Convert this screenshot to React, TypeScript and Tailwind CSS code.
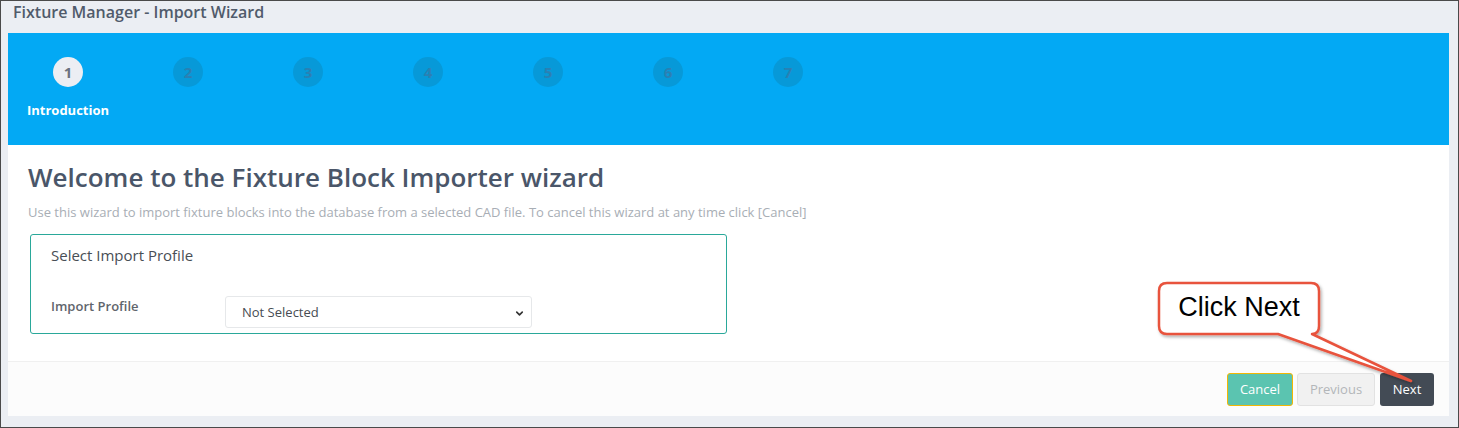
import React from 'react';
import { ChevronDown } from 'lucide-react';

const steps = [1, 2, 3, 4, 5, 6, 7];

export default function App() {
  return (
    <div
      className="relative w-[1459px] h-[428px] border border-[#4a4a4a] bg-[#ebeef3] overflow-hidden"
      style={{ fontFamily: '"Open Sans", "Noto Sans", sans-serif' }}
    >
      <div className="h-[32px] pl-[12px] flex items-start">
        <h1 className="text-[16px] leading-[22px] font-semibold text-[#505b6b]">Fixture Manager - Import Wizard</h1>
      </div>

      <div className="ml-[7px] w-[1441px] flex flex-col">
        {/* steps */}
        <div className="h-[112px] bg-[#03a9f4] flex">
          {steps.map((n) => (
            <div key={n} className="w-[120px] flex flex-col items-center pt-[24px]">
              <div
                className={
                  n === 1
                    ? 'w-[30px] h-[30px] rounded-full bg-[#eceef3] flex items-center justify-center text-[15px] font-bold text-[#6b7280]'
                    : 'w-[30px] h-[30px] rounded-full bg-[#0799d8] flex items-center justify-center text-[15px] font-bold text-[#2a80b3]'
                }
              >
                {n}
              </div>
              {n === 1 && <p className="mt-[14px] text-[13px] leading-[18px] font-bold text-white">Introduction</p>}
            </div>
          ))}
        </div>

        {/* body */}
        <div className="h-[216px] bg-white pl-[20px] pt-[14px]">
          <h2 className="text-[26px] leading-[36px] font-semibold text-[#4a5669]">Welcome to the Fixture Block Importer wizard</h2>
          <p className="mt-[8px] text-[13px] leading-[18px] text-[#a8aeb5]">
            Use this wizard to import fixture blocks into the database from a selected CAD file. To cancel this wizard at any time click [Cancel]
          </p>
          <div className="mt-[13px] ml-[2px] w-[697px] h-[100px] border border-[#2aa89a] rounded-[3px] pl-[20px] pt-[10px]">
            <p className="text-[15px] leading-[20px] text-[#484e55]">Select Import Profile</p>
            <div className="mt-[31px] flex items-start">
              <label className="w-[174px] pt-[1px] text-[13px] leading-[18px] font-semibold text-[#5f656c]">Import Profile</label>
              <div className="relative w-[307px] h-[32px] border border-[#e6e8ea] rounded-[3px] flex items-center pl-[16px]">
                <span className="text-[13px] text-[#474c52] pt-[2px]">Not Selected</span>
                <ChevronDown className="absolute right-[6px] top-[11px] text-[#333]" size={11} strokeWidth={3.5} />
              </div>
            </div>
          </div>
        </div>

        {/* footer */}
        <div className="h-[55px] bg-[#fcfcfc] border-t border-[#f0f0f0] flex justify-end items-start pt-[11px] pr-[15px] gap-[4px]">
          <button className="w-[66px] h-[33px] rounded-[3px] bg-[#5bc4b0] border border-[#f2b705] text-white text-[13px]">Cancel</button>
          <button className="w-[78px] h-[33px] rounded-[3px] bg-[#f1f1f1] border border-[#e2e2e2] text-[#b3b6b9] text-[13px]">Previous</button>
          <button className="ml-[1px] w-[54px] h-[33px] rounded-[3px] bg-[#434b55] text-white text-[13px]">Next</button>
        </div>
      </div>

      {/* callout */}
      <div className="absolute left-[1149px] top-[274px] w-[270px] h-[115px]">
        <svg width="270" height="115" viewBox="0 0 270 115" className="absolute inset-0">
          <defs>
            <filter id="sh" x="-10%" y="-10%" width="130%" height="140%">
              <feDropShadow dx="1.5" dy="2" stdDeviation="1.5" floodColor="#000" floodOpacity="0.3" />
            </filter>
          </defs>
          <path
            d="M 17 8 H 161 Q 169 8 169 16 V 51 Q 169 59 162 59 L 261 106 L 128 59 H 17 Q 9 59 9 51 V 16 Q 9 8 17 8 Z"
            fill="#fff"
            stroke="#e8533d"
            strokeWidth="2.5"
            strokeLinejoin="round"
            filter="url(#sh)"
          />
        </svg>
        <div
          className="absolute left-[9px] top-[7px] w-[160px] h-[51px] flex items-center justify-center text-[27px] text-black"
          style={{ fontFamily: '"Liberation Sans", Arial, sans-serif' }}
        >
          Click Next
        </div>
      </div>
    </div>
  );
}
